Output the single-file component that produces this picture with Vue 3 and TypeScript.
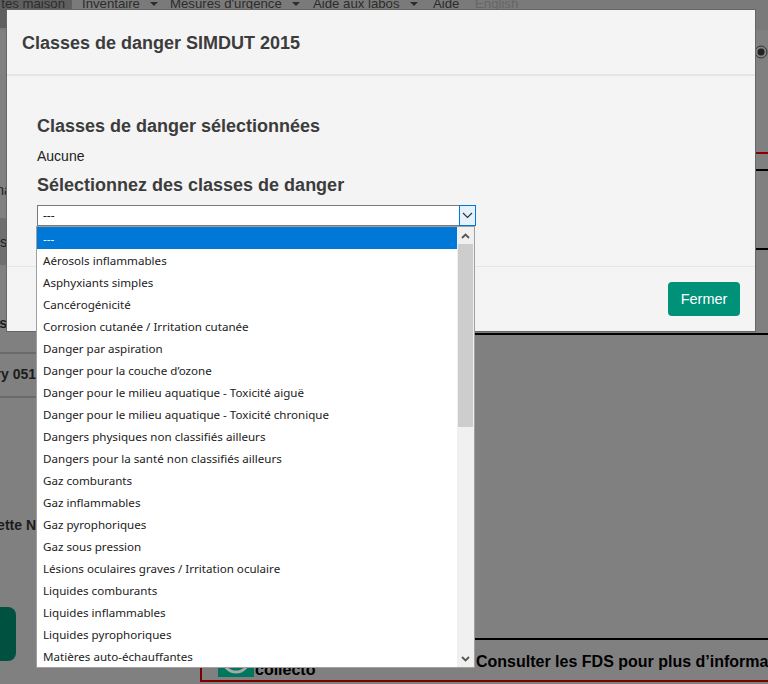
<script setup lang="ts">
const options: string[] = [
  '---',
  'Aérosols inflammables',
  'Asphyxiants simples',
  'Cancérogénicité',
  'Corrosion cutanée / Irritation cutanée',
  'Danger par aspiration',
  "Danger pour la couche d’ozone",
  'Danger pour le milieu aquatique - Toxicité aiguë',
  'Danger pour le milieu aquatique - Toxicité chronique',
  'Dangers physiques non classifiés ailleurs',
  'Dangers pour la santé non classifiés ailleurs',
  'Gaz comburants',
  'Gaz inflammables',
  'Gaz pyrophoriques',
  'Gaz sous pression',
  'Lésions oculaires graves / Irritation oculaire',
  'Liquides comburants',
  'Liquides inflammables',
  'Liquides pyrophoriques',
  'Matières auto-échauffantes',
]
</script>

<template>
  <div class="page">
    <nav class="nav">
      <span class="nav-item current">tes maison</span>
      <span class="nav-item w-inv">Inventaire<i class="caret"></i></span>
      <span class="nav-item w-mes">Mesures d'urgence<i class="caret"></i></span>
      <span class="nav-item w-labs">Aide aux labos<i class="caret"></i></span>
      <span class="nav-item w-aide">Aide</span>
      <span class="nav-item english">English</span>
    </nav>

    <div class="body">
      <div class="left">
        <div class="l-row l-na"><span>nal</span></div>
        <div class="l-row l-band"><span>es</span></div>
        <div class="l-row l-es"><b>es</b></div>
        <div class="l-row l-ry"><b>ry 051</b></div>
        <div class="l-row l-ette"><b>ette N</b></div>
        <div class="green-btn"></div>
      </div>
      <div class="right">
        <svg class="radio" width="14" height="14" viewBox="0 0 14 14">
          <circle cx="7" cy="7" r="6" fill="none" stroke="#333" stroke-width="1" />
          <circle cx="7" cy="7" r="3.5" fill="#222" />
        </svg>
        <div class="line red"></div>
        <div class="line black l2"></div>
        <div class="line black l3"></div>
        <div class="line black l4"></div>
      </div>
    </div>

    <footer class="foot">
      <svg class="foot-icon" width="36" height="18" viewBox="0 0 36 18">
        <rect width="36" height="18" fill="#00765f" />
        <path d="M5 0a13 13 0 0 0 26 0" fill="none" stroke="#a8a8a8" stroke-width="3" />
        <path d="M11 0a7 7 0 0 0 14 0" fill="none" stroke="#00765f" stroke-width="2" />
      </svg>
      <b class="collecto">collecto</b>
      <b class="consult">Consulter les FDS pour plus d’informations</b>
    </footer>

    <section class="modal">
      <header class="modal-head">
        <h4>Classes de danger SIMDUT 2015</h4>
      </header>
      <div class="modal-body">
        <h3>Classes de danger sélectionnées</h3>
        <p>Aucune</p>
        <h3 class="pick">Sélectionnez des classes de danger</h3>
        <div class="select">
          <span class="select-value">---</span>
          <span class="select-arrow">
            <svg width="11" height="7" viewBox="0 0 11 7">
              <path d="M1 1l4.5 4.5L10 1" fill="none" stroke="#333" stroke-width="1.2" />
            </svg>
          </span>
        </div>
      </div>
      <div class="modal-foot">
        <button class="close" type="button">Fermer</button>
      </div>
    </section>

    <div class="dropdown">
      <ul class="options">
        <li v-for="(o, i) in options" :key="o" :class="{ active: i === 0 }">{{ o }}</li>
      </ul>
      <div class="scrollbar">
        <span class="sb-btn">
          <svg width="9" height="6" viewBox="0 0 9 6"><path d="M1 5l3.5-3.5L8 5" fill="none" stroke="#555" stroke-width="1.8" /></svg>
        </span>
        <span class="sb-thumb"></span>
        <span class="sb-track"></span>
        <span class="sb-btn">
          <svg width="9" height="6" viewBox="0 0 9 6"><path d="M1 1l3.5 3.5L8 1" fill="none" stroke="#555" stroke-width="1.8" /></svg>
        </span>
      </div>
    </div>
  </div>
</template>

<style>
html, body { margin: 0; overflow: hidden; }
</style>

<style scoped>
.page {
  position: relative;
  width: 768px;
  height: 684px;
  overflow: hidden;
  background: #808080;
  font-family: "Liberation Sans", Arial, sans-serif;
  color: #111;
}
.nav {
  display: flex;
  height: 30px;
  background: #7a7a7a;
  font-size: 13.2px;
  line-height: 16px;
  color: #2c2c2c;
}
.nav-item {
  display: block;
  margin-top: -4px;
  white-space: nowrap;
}
.current {
  width: 72px;
  box-sizing: border-box;
  margin-top: 0;
  height: 28px;
  line-height: 8px;
  background: #5f5f5f;
  text-align: right;
  padding-right: 7px;
}
.w-inv { margin-left: 10px; width: 88px; }
.w-mes { width: 143px; }
.w-labs { width: 120px; }
.w-aide { width: 42px; }
.english { color: #666; }
.caret {
  display: inline-block;
  width: 0;
  height: 0;
  margin-left: 10px;
  vertical-align: 2px;
  border-left: 4px solid transparent;
  border-right: 4px solid transparent;
  border-top: 4px solid #2c2c2c;
}
.body {
  display: flex;
  height: 608px;
}
.left {
  width: 36px;
  flex: none;
  font-size: 14px;
  color: #1c1c1c;
}
.l-row {
  display: flex;
  justify-content: flex-end;
  white-space: nowrap;
  box-sizing: border-box;
}
.l-na { height: 188px; padding-top: 152px; padding-right: 21px; }
.l-band { height: 47px; background: #6f6f6f; padding-top: 16px; padding-right: 29px; }
.l-es { height: 89px; padding-top: 50px; padding-right: 29px; border-bottom: 2px solid #6a6a6a; }
.l-ry { height: 44px; padding: 12px 0 0; font-size: 14px; border-bottom: 2px solid #6a6a6a; }
.l-ette { height: 209px; padding-top: 119px; font-size: 14px; }
.green-btn {
  width: 16px;
  height: 54px;
  background: #00513f;
  border-radius: 0 8px 8px 0;
}
.right {
  flex: 1;
  padding-left: 439px;
  display: flex;
  flex-direction: column;
}
.radio { margin: 15px 0 0 279px; flex: none; }
.line { flex: none; }
.red { height: 2px; background: #8a0000; margin-top: 93px; }
.black { height: 2px; background: #000; }
.l2 { margin-top: 15px; }
.l3 { margin-top: 77px; }
.l4 { margin-top: 83px; }
.foot {
  box-sizing: border-box;
  display: flex;
  align-items: flex-end;
  height: 44px;
  margin-left: 200px;
  width: 700px;
  border-top: 2px solid #000;
  border-left: 2px solid #7d0000;
  border-bottom: 2px solid #7d0000;
  padding: 0 0 1px 16px;
  white-space: nowrap;
  color: #000;
  font-size: 16px;
}
.foot-icon { flex: none; margin-bottom: 2px; }
.collecto { margin-left: 1px; line-height: 18px; width: 221px; }
.consult { align-self: flex-start; margin-top: 13px; }

.modal {
  position: absolute;
  left: 6px;
  top: 9px;
  width: 750px;
  height: 323px;
  box-sizing: border-box;
  background: #f4f4f4;
  border: 1px solid #666;
  display: flex;
  flex-direction: column;
  color: #3c3c3c;
}
.modal-head {
  box-sizing: border-box;
  height: 66px;
  flex: none;
  border-bottom: 2px solid #e5e5e5;
  display: flex;
  align-items: center;
  padding: 2px 15px 0;
}
h4 { margin: 0; font-size: 18px; font-weight: bold; line-height: 20px; }
.modal-body { flex: 1; padding: 39px 30px 0; }
h3 { margin: 0; font-size: 18px; font-weight: bold; line-height: 22px; }
p { margin: 11px 0 0; font-size: 14px; line-height: 16px; color: #222; }
.pick { margin-top: 10px; }
.select {
  display: flex;
  width: 439px;
  height: 21px;
  box-sizing: border-box;
  margin-top: 9px;
  background: #fff;
  border: 1px solid #7a7a7a;
  border-right: none;
  font-family: "Noto Sans", "Open Sans", sans-serif;
  font-size: 12px;
  line-height: 20px;
  color: #222;
}
.select-value { flex: 1; padding-left: 5px; }
.select-arrow {
  width: 17px;
  height: 21px;
  margin-top: -1px;
  box-sizing: border-box;
  background: #e5f1fb;
  border: 1px solid #0078d7;
  display: flex;
  align-items: center;
  justify-content: center;
}
.modal-foot {
  flex: none;
  height: 65px;
  box-sizing: border-box;
  border-top: 1px solid #e5e5e5;
  display: flex;
  justify-content: flex-end;
  padding: 15px 15px 0 0;
}
.close {
  width: 72px;
  height: 34px;
  border: none;
  border-radius: 4px;
  background: #009179;
  color: #fff;
  font: 14.5px "Liberation Sans", Arial, sans-serif;
  padding: 0;
}
.dropdown {
  position: absolute;
  left: 36px;
  top: 226px;
  width: 439px;
  height: 442px;
  box-sizing: border-box;
  display: flex;
  background: #fff;
  border: 1px solid #a0a0a0;
}
.options {
  flex: 1;
  list-style: none;
  margin: 0;
  padding: 0;
  overflow: hidden;
  font-family: "Noto Sans", "Open Sans", sans-serif;
  font-size: 11.6px;
  color: #222;
}
.options li {
  height: 22px;
  line-height: 24px;
  padding-left: 6px;
  white-space: nowrap;
}
.options li.active { background: #0078d7; color: #fff; }
.scrollbar {
  width: 17px;
  flex: none;
  display: flex;
  flex-direction: column;
  background: #f0f0f0;
}
.sb-btn {
  height: 17px;
  flex: none;
  display: flex;
  align-items: center;
  justify-content: center;
}
.sb-thumb {
  height: 183px;
  flex: none;
  margin: 0 1px;
  background: #cdcdcd;
}
.sb-track { flex: 1; }
</style>
